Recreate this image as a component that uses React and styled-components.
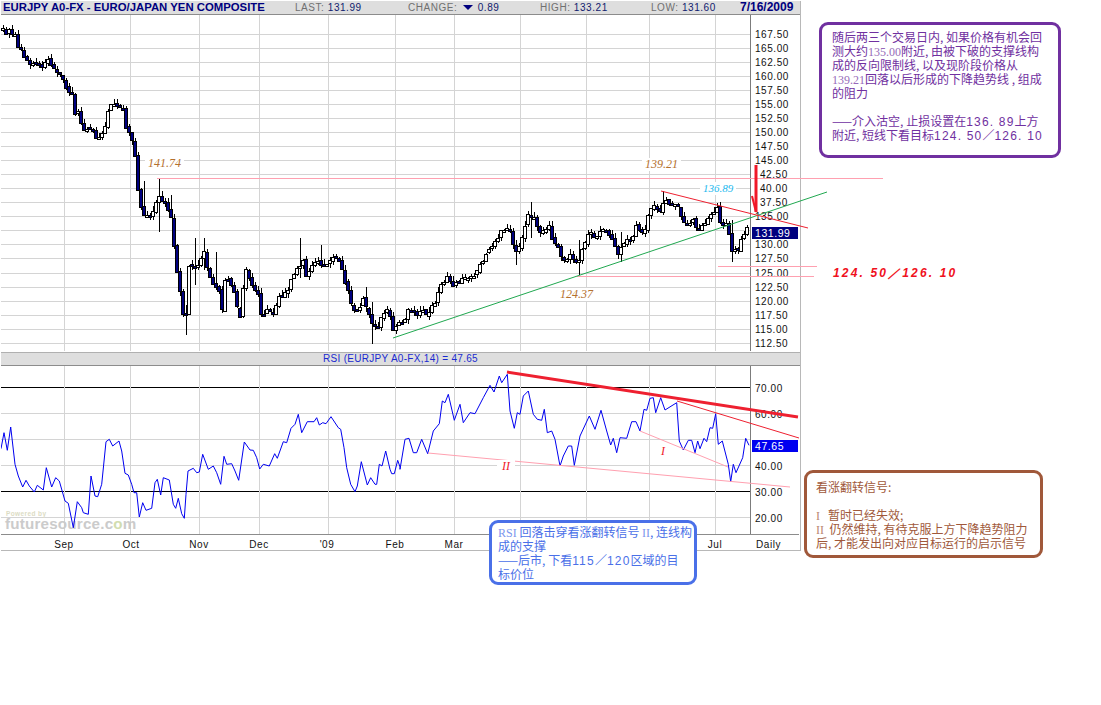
import React from "react";
import styled, { createGlobalStyle } from "styled-components";

const GlobalStyle = createGlobalStyle`
  html, body {
    margin: 0;
    padding: 0;
    background: #fff;
  }
`;

const SANS = `"Liberation Sans", Arial, sans-serif`;
const CJK = `"Noto Sans CJK SC", "Liberation Sans", sans-serif`;
const SERIF = `"Liberation Serif", "Times New Roman", serif`;

const Page = styled.div`
  position: relative;
  display: flex;
  align-items: flex-start;
  width: 1101px;
  height: 705px;
  overflow: hidden;
  background: #fff;
`;
const ChartFrame = styled.div`
  display: flex;
  flex-direction: column;
  flex: none;
  width: 799px;
  margin: 1px 0 0 1px;
  border-right: 1px solid #b8b8b8;
  border-bottom: 1px solid #b8b8b8;
`;
const HeaderBar = styled.div`
  display: grid;
  grid-template-columns: 294px 113px 132px 111px 89px auto;
  align-items: center;
  height: 13px;
  background: #dedede;
  border-bottom: 1px solid #8c8c8c;
  font: 10px/13px ${SANS};
  letter-spacing: 0.55px;
  color: #707070;
  white-space: nowrap;
`;
const Symbol = styled.span`
  padding-left: 2px;
  font-size: 11.35px;
  font-weight: bold;
  letter-spacing: 0;
  color: #00007f;
`;
const Quote = styled.b`
  font-weight: normal;
  color: #10206e;
`;
const DownMark = styled.i`
  display: inline-block;
  margin: 0 5px 1px 2px;
  border-left: 5px solid transparent;
  border-right: 5px solid transparent;
  border-top: 5px solid #00007f;
`;
const DateCell = styled.span`
  font-size: 12px;
  font-weight: bold;
  letter-spacing: 0;
  color: #00007f;
`;
const PaneTitle = styled.div`
  height: 12px;
  margin-top: 1px;
  background: #dedede;
  border-top: 1px solid #b0b0b0;
  border-bottom: 1px solid #8c8c8c;
  font: 10px/12px ${SANS};
  letter-spacing: 0.3px;
  text-align: center;
  color: #1a2ad0;
`;
const PaneSvg = styled.svg`
  display: block;
  flex: none;
`;
const GridLine = styled.line`
  stroke: ${p => p.$color || "#d4d4d4"};
  stroke-width: 1;
  shape-rendering: crispEdges;
`;
const AxisText = styled.text`
  font: 10px ${SANS};
  letter-spacing: 0.55px;
  fill: #111;
`;
const QuoteTag = styled.rect`
  fill: ${p => p.$color};
  shape-rendering: crispEdges;
`;
const QuoteTagText = styled.text`
  font: 10.5px ${SANS};
  letter-spacing: 0.55px;
  fill: #fff;
`;
const Watermark = styled.text`
  font: bold 15.2px ${SANS};
  letter-spacing: 0.2px;
  fill: #cbcbcb;
`;
const WatermarkDot = styled.tspan`
  fill: #d2ddb0;
`;
const WatermarkSmall = styled.text`
  font: bold 6.5px ${SANS};
  letter-spacing: 0.4px;
  fill: #dcdcc4;
`;
const SideColumn = styled.div`
  display: flex;
  flex-direction: column;
  flex: none;
  width: 300px;
`;
const Note = styled.div`
  box-sizing: border-box;
  width: ${p => p.$width}px;
  height: ${p => p.$height}px;
  border: 3px solid ${p => p.$color};
  border-radius: 9px;
  background: #fff;
  color: ${p => p.$color};
  font: 12px/14px ${CJK};
  white-space: nowrap;
`;
const PurpleNote = styled(Note)`
  margin: 22px 0 0 18px;
  padding: 5px 0 0 10px;
`;
const BrownNote = styled(Note)`
  margin: 312px 0 0 3px;
  padding: 7px 0 0 9px;
`;
const BlueNote = styled(Note)`
  position: absolute;
  left: 489px;
  top: 520px;
  padding: 2px 0 0 6px;
`;
const Gap = styled.div`
  height: 14px;
`;
const SerifNum = styled.span`
  font-family: ${SERIF};
  font-size: 12px;
  line-height: 0;
  opacity: 0.72;
`;
const WideNum = styled.span`
  font-family: ${SANS};
  line-height: 0;
  letter-spacing: 1.2px;
`;
const Marks = styled.svg`
  position: absolute;
  left: 0;
  top: 0;
  pointer-events: none;
`;
const Trend = styled.line`
  stroke: ${p => p.$color};
  stroke-width: ${p => p.$weight || 1};
`;
const PriceTag = styled.span`
  position: absolute;
  left: ${p => p.$left}px;
  top: ${p => p.$top}px;
  padding: 0 ${p => p.$pad ?? 3}px;
  background: #fff;
  color: ${p => p.$color};
  font: italic ${p => p.$size || 12}px/13px ${SERIF};
`;
const TargetTag = styled.span`
  position: absolute;
  left: 833px;
  top: 266px;
  color: #f01020;
  font: italic bold 12px/14px ${SANS};
  letter-spacing: 2.15px;
  white-space: nowrap;
`;

// closing levels read off the chart, x / y in page pixels
const PRICE_PATH = [
  [2, 32], [12, 30], [15, 33], [17, 45], [22, 55], [28, 60], [33, 63], [40, 65], [47, 60], [50, 68],
  [55, 70], [60, 72], [63, 78], [66, 88], [72, 90], [73, 95], [75, 122], [78, 112], [82, 125], [87, 130],
  [92, 130], [95, 135], [100, 135], [105, 125], [108, 105], [112, 100], [118, 103], [122, 104], [125, 130],
  [130, 135], [133, 145], [135, 155], [139, 207], [145, 215], [152, 214], [158, 198], [165, 205], [170, 210],
  [173, 237], [176, 270], [182, 307], [185, 325], [188, 267], [190, 260], [197, 270], [203, 248], [208, 277],
  [217, 287], [222, 308], [225, 273], [233, 288], [239, 320], [245, 270], [250, 283], [257, 293], [260, 315],
  [267, 310], [272, 313], [277, 300], [282, 297], [287, 288], [292, 278], [297, 268], [302, 260], [305, 277],
  [310, 263], [320, 263], [328, 263], [333, 257], [340, 263], [347, 290], [350, 305], [355, 315], [362, 298],
  [367, 308], [370, 323], [377, 327], [383, 315], [388, 307], [392, 327], [398, 320], [402, 320], [410, 307],
  [415, 317], [420, 310], [427, 313], [433, 303], [442, 280], [447, 277], [452, 283], [457, 285], [462, 277],
  [467, 275], [475, 272], [483, 257], [490, 247], [497, 242], [500, 232], [510, 228], [512, 240], [515, 253],
  [520, 242], [525, 220], [532, 213], [535, 227], [542, 232], [547, 223], [552, 238], [558, 248], [562, 263],
  [570, 250], [577, 267], [583, 243], [590, 228], [597, 238], [603, 228], [610, 237], [617, 253], [622, 242],
  [630, 240], [635, 228], [643, 233], [647, 217], [652, 205], [658, 213], [663, 202], [670, 205], [677, 200],
  [680, 217], [685, 227], [692, 220], [697, 228], [703, 222], [710, 218], [716, 205], [720, 223], [727, 223],
  [730, 252], [735, 252], [740, 242], [745, 228], [750, 232]
];

// long shadows that stand out, x: [high, low]
const SPIKES = {
  142: [181, 216], 157: [178, 232], 169: [195, 215], 184: [305, 335], 193: [238, 285], 202: [238, 270],
  214: [252, 290], 298: [238, 278], 319: [245, 268], 364: [287, 312], 370: [302, 344], 529: [202, 238],
  516: [240, 265], 578: [240, 275], 620: [232, 262], 663: [191, 215], 730: [220, 262]
};

// rsi traced at 3x, offset is added after scaling
const RSI_LEFT = [
  [3, 293], [12, 245], [22, 298], [32, 228], [45, 340], [55, 375], [68, 408], [78, 388], [88, 405], [103, 423],
  [112, 403], [130, 417], [139, 350], [155, 408], [167, 380], [178, 390], [195, 450], [205, 457], [220, 530],
  [232, 452], [245, 470], [250, 485], [265, 490], [273, 375], [285, 435], [293, 437], [305, 400], [318, 272],
  [328, 265], [338, 285], [357, 270], [365, 300], [375, 367], [385, 372], [395, 400], [402, 425], [410, 425],
  [418, 498], [428, 455], [438, 478], [455, 472], [465, 395], [472, 385], [482, 432], [490, 380], [508, 387],
  [520, 460], [527, 472], [535, 442], [545, 488], [553, 502], [558, 430], [564, 360], [580, 352], [590, 365],
  [598, 363], [608, 310], [625, 355], [640, 345], [650, 365], [662, 400], [672, 316], [680, 340], [695, 338],
  [705, 360], [716, 388], [733, 273], [750, 297], [760, 298], [770, 320], [779, 354], [790, 340], [808, 345],
  [824, 308], [832, 322], [850, 272], [860, 275], [873, 232], [885, 220], [895, 190], [905, 245], [922, 212],
  [942, 212], [950, 200], [958, 222], [968, 215], [978, 218], [993, 197], [1015, 230], [1022, 235], [1032, 290],
  [1040, 350], [1052, 400], [1065, 422], [1072, 405], [1084, 332], [1102, 402], [1112, 380], [1125, 400],
  [1130, 400], [1138, 340], [1146, 345], [1157, 300], [1170, 355], [1175, 368], [1183, 368], [1193, 328], [1200, 348]
];
const RSI_RIGHT = [
  [0, 355], [15, 265], [27, 262], [40, 305], [50, 305], [65, 265], [83, 308], [100, 240], [118, 218], [127, 150],
  [135, 155], [145, 130], [163, 208], [180, 160], [190, 215], [210, 185], [225, 188], [250, 140], [270, 103],
  [282, 123], [298, 75], [305, 95], [322, 70], [330, 180], [343, 232], [352, 185], [360, 190], [370, 135],
  [385, 120], [400, 190], [412, 205], [425, 208], [433, 175], [442, 245], [455, 240], [465, 265], [480, 345],
  [490, 315], [505, 285], [515, 285], [523, 343], [540, 255], [568, 195], [585, 235], [603, 178], [620, 240],
  [632, 282], [640, 262], [650, 305], [660, 260], [680, 262], [695, 212], [708, 212], [720, 240], [732, 175],
  [740, 178], [750, 142], [760, 140], [767, 185], [782, 140], [795, 177], [830, 155], [838, 270], [850, 297],
  [865, 268], [875, 268], [885, 305], [893, 270], [900, 293], [912, 262], [920, 272], [930, 230], [938, 232],
  [947, 188], [955, 280], [967, 270], [985, 340], [992, 392], [1000, 340], [1008, 365], [1028, 320], [1037, 262],
  [1047, 283]
];
const rsiPoints = [
  ...RSI_LEFT.map(([x, y]) => `${(x / 3).toFixed(1)},${(350 + y / 3).toFixed(1)}`),
  ...RSI_RIGHT.map(([x, y]) => `${(400 + x / 3).toFixed(1)},${(350 + y / 3).toFixed(1)}`)
].join(" ");

const MONTH_LINES = [64, 130, 199, 259, 328, 395, 454, 520, 586, 649, 715];
// Apr, May and Jun sit under the blue note
const MONTHS = [
  ["Sep", 64], ["Oct", 131], ["Nov", 199], ["Dec", 259], ["'09", 327], ["Feb", 395], ["Mar", 454], ["Jul", 715]
];
const PRICE_ROWS = Array.from({ length: 23 }, (_, i) => ({
  y: Math.round(33.5 + i * 14.06),
  label: (167.5 - i * 2.5).toFixed(2)
}));
// the red arrow wipes the hundreds digit on these rows
const shortLabel = { "142.50": "42.50", "140.00": "40.00", "137.50": "37.50" };
const RSI_ROWS = [
  { y: 386, label: "70.00", dark: true },
  { y: 412, label: "60.00" },
  { y: 438 },
  { y: 464, label: "40.00" },
  { y: 490, label: "30.00", dark: true },
  { y: 516, label: "20.00" }
];

function levelAt(x) {
  for (let i = 1; i < PRICE_PATH.length; i++) {
    const [x0, y0] = PRICE_PATH[i - 1];
    const [x1, y1] = PRICE_PATH[i];
    if (x <= x1) return y0 + ((y1 - y0) * (x - x0)) / (x1 - x0);
  }
  return 232;
}

function buildCandles() {
  let seed = 71;
  const rnd = () => {
    seed = (seed * 16807) % 2147483647;
    return seed / 2147483647;
  };
  const out = [];
  let prev = 30;
  for (let x = 1; x <= 746; x += 3) {
    const close = levelAt(x + 1.5) + (rnd() - 0.5) * 7;
    const open = prev + (rnd() - 0.5) * 3;
    const top = Math.min(open, close);
    const bottom = Math.max(open, close);
    const spike = SPIKES[x] || SPIKES[x + 1] || SPIKES[x + 2];
    out.push({
      x,
      down: close > open,
      top,
      height: Math.max(bottom - top, 2),
      high: spike ? Math.min(spike[0], top) : top - rnd() * 5,
      low: spike ? Math.max(spike[1], bottom) : bottom + rnd() * 5
    });
    prev = close;
  }
  return out;
}
const CANDLES = buildCandles();

function PricePane() {
  return (
    <PaneSvg width="798" height="336" viewBox="1 15 798 336">
      {PRICE_ROWS.map(r => (
        <GridLine key={r.y} x1="1" x2="750" y1={r.y + 0.5} y2={r.y + 0.5} />
      ))}
      {MONTH_LINES.map(x => (
        <GridLine key={x} x1={x + 0.5} x2={x + 0.5} y1="15" y2="351" />
      ))}
      {CANDLES.map(c => (
        <g key={c.x} shapeRendering="crispEdges">
          <line x1={c.x + 2} x2={c.x + 2} y1={c.high} y2={c.low} stroke="#000" />
          <rect
            x={c.x + 0.5}
            y={Math.round(c.top) + 0.5}
            width="3"
            height={Math.round(c.height)}
            fill={c.down ? "#00007f" : "#fff"}
            stroke="#000"
          />
        </g>
      ))}
      <GridLine $color="#7c7c7c" x1="750.5" x2="750.5" y1="15" y2="351" />
      {PRICE_ROWS.filter(r => r.label !== "132.50").map(r => (
        <AxisText key={r.label} x={shortLabel[r.label] ? 760 : 755} y={r.y + 4}>
          {shortLabel[r.label] || r.label}
        </AxisText>
      ))}
      <QuoteTag $color="#00007f" x="752" y="227" width="46" height="12" />
      <QuoteTagText x="755" y="237">131.99</QuoteTagText>
    </PaneSvg>
  );
}

function RsiPane() {
  return (
    <PaneSvg width="798" height="168" viewBox="1 365 798 168">
      {RSI_ROWS.map(r => (
        <GridLine key={r.y} $color={r.dark ? "#000" : undefined} x1="1" x2="750" y1={r.y + 0.5} y2={r.y + 0.5} />
      ))}
      {MONTH_LINES.map(x => (
        <GridLine key={x} x1={x + 0.5} x2={x + 0.5} y1="365" y2="533" />
      ))}
      <WatermarkSmall x="6" y="515">Powered by</WatermarkSmall>
      <Watermark x="5" y="528">futuresource.c<WatermarkDot>o</WatermarkDot>m</Watermark>
      <polyline points={rsiPoints} fill="none" stroke="#0000f0" strokeWidth="1" />
      <GridLine $color="#7c7c7c" x1="750.5" x2="750.5" y1="365" y2="533" />
      {RSI_ROWS.filter(r => r.label).map(r => (
        <AxisText key={r.label} x="755" y={r.y + 5}>{r.label}</AxisText>
      ))}
      <QuoteTag $color="#0000f0" x="752" y="439" width="46" height="12" />
      <QuoteTagText x="755" y="449">47.65</QuoteTagText>
    </PaneSvg>
  );
}

function DateAxis() {
  return (
    <PaneSvg width="798" height="16" viewBox="1 533 798 16">
      <GridLine $color="#8c8c8c" x1="1" x2="799" y1="533.5" y2="533.5" />
      {MONTHS.map(([label, x]) => (
        <AxisText key={label} x={x} y="547" textAnchor="middle">{label}</AxisText>
      ))}
      <AxisText x="756" y="547">Daily</AxisText>
    </PaneSvg>
  );
}

export default function App() {
  return (
    <Page>
      <GlobalStyle />
      <ChartFrame>
        <HeaderBar>
          <Symbol>EURJPY A0-FX - EURO/JAPAN YEN COMPOSITE</Symbol>
          <span>LAST: <Quote>131.99</Quote></span>
          <span>CHANGE: <DownMark /><Quote>0.89</Quote></span>
          <span>HIGH: <Quote>133.21</Quote></span>
          <span>LOW: <Quote>131.60</Quote></span>
          <DateCell>7/16/2009</DateCell>
        </HeaderBar>
        <PricePane />
        <PaneTitle>RSI (EURJPY A0-FX,14) = 47.65</PaneTitle>
        <RsiPane />
        <DateAxis />
      </ChartFrame>
      <SideColumn>
        <PurpleNote $width={242} $height={136} $color="#7030a0">
          随后两三个交易日内, 如果价格有机会回<br />
          测大约<SerifNum>135.00</SerifNum>附近, 由被下破的支撑线构<br />
          成的反向限制线, 以及现阶段价格从<br />
          <SerifNum>139.21</SerifNum>回落以后形成的下降趋势线 , 组成<br />
          的阻力
          <Gap />
          ——介入沽空, 止损设置在<WideNum>136. 89</WideNum>上方<br />
          附近, 短线下看目标<WideNum>124. 50</WideNum>／<WideNum>126. 10</WideNum>
        </PurpleNote>
        <BrownNote $width={239} $height={88} $color="#a0583a">
          看涨翻转信号:
          <Gap />
          <SerifNum>I</SerifNum>&nbsp;&nbsp;&nbsp;暂时已经失效;<br />
          <SerifNum>II</SerifNum>&nbsp;&nbsp;仍然维持, 有待克服上方下降趋势阻力<br />
          后, 才能发出向对应目标运行的启示信号
        </BrownNote>
      </SideColumn>
      <Marks width="1101" height="705" viewBox="0 0 1101 705">
        <Trend $color="#ffa0b0" x1="157" y1="178.5" x2="883" y2="178.5" />
        <Trend $color="#ffa0b0" x1="718" y1="266.5" x2="817" y2="266.5" />
        <Trend $color="#ffa0b0" x1="577" y1="276.5" x2="814" y2="276.5" />
        <Trend $color="#20a850" x1="393" y1="338" x2="827" y2="192" />
        <Trend $color="#ee2030" x1="661" y1="191" x2="808" y2="228" />
        <Trend $color="#f01828" $weight={3} x1="756" y1="165" x2="756" y2="212" />
        <Trend $color="#f01828" $weight={2} x1="752" y1="196" x2="756" y2="212" />
        <Trend $color="#ffa0b0" x1="428" y1="453" x2="790" y2="487" />
        <Trend $color="#ffa0b0" x1="640" y1="431" x2="728" y2="467" />
        <Trend $color="#ee2030" $weight={3} x1="507" y1="372" x2="798" y2="417" />
        <Trend $color="#ee2030" x1="677" y1="401" x2="799" y2="438" />
      </Marks>
      <PriceTag $left={145} $top={157} $color="#b4702e">141.74</PriceTag>
      <PriceTag $left={642} $top={158} $color="#b4702e">139.21</PriceTag>
      <PriceTag $left={700} $top={182} $size={11} $color="#22b8ee">136.89</PriceTag>
      <PriceTag $left={557} $top={288} $color="#b4702e">124.37</PriceTag>
      <PriceTag $left={497} $top={460} $pad={5} $color="#f01828">II</PriceTag>
      <PriceTag $left={660} $top={445} $pad={1} $color="#f01828">I</PriceTag>
      <TargetTag>124. 50／126. 10</TargetTag>
      <BlueNote $width={208} $height={65} $color="#4a70e8">
        <SerifNum>RSI</SerifNum> 回落击穿看涨翻转信号 <SerifNum>II</SerifNum>, 连线构<br />
        成的支撑<br />
        ——后市, 下看<WideNum>115</WideNum>／<WideNum>120</WideNum>区域的目<br />
        标价位
      </BlueNote>
    </Page>
  );
}
